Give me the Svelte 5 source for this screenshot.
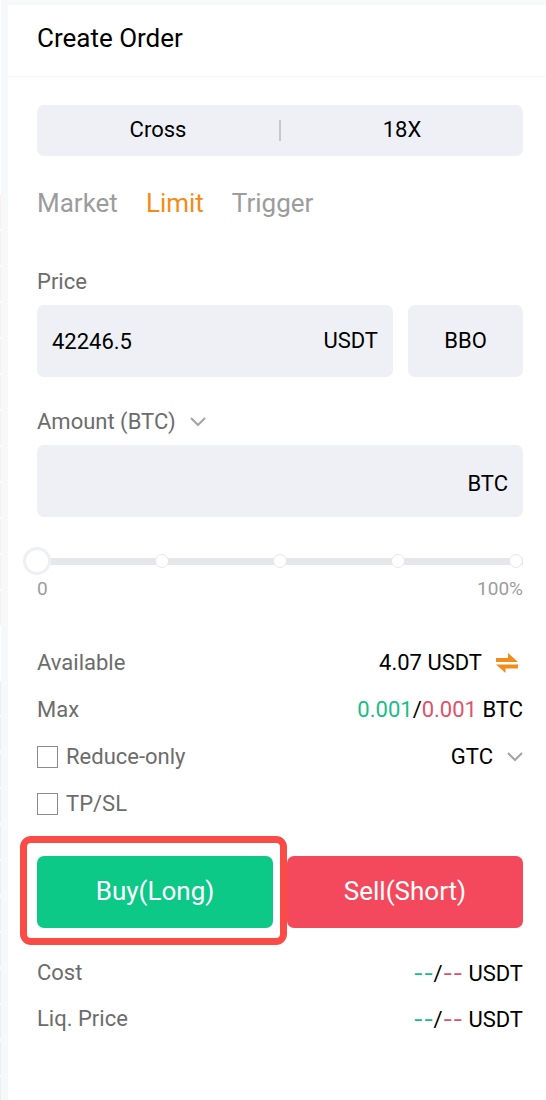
<script>
  const orderTypes = ['Market', 'Limit', 'Trigger'];
  const estimates = ['Cost', 'Liq. Price'];

  let orderType = 'Limit';
  let price = '42246.5';
  let amount = '';
  let unit = 'BTC';
  let percent = 0;
  let timeInForce = 'GTC';
  let reduceOnly = false;
  let tpsl = false;
</script>

<div class="page">
  <div class="book-edge">
    <div class="asks"></div>
    <div class="bids"></div>
  </div>

  <main class="panel">
    <header>
      <h1>Create Order</h1>
    </header>

    <form class="order" on:submit|preventDefault>
      <div class="margin-mode">
        <button type="button">Cross</button>
        <span class="divider"></span>
        <button type="button">18X</button>
      </div>

      <div class="tabs">
        {#each orderTypes as type}
          <button type="button" class:active={type === orderType} on:click={() => (orderType = type)}>{type}</button>
        {/each}
      </div>

      <label class="price-label" for="price">Price</label>
      <div class="price-row">
        <div class="field">
          <input id="price" type="text" bind:value={price} />
          <span>USDT</span>
        </div>
        <button type="button" class="bbo">BBO</button>
      </div>

      <div class="amount-label">
        <select aria-label="Amount unit" bind:value={unit}>
          <option value="BTC">Amount (BTC)</option>
          <option value="USDT">Amount (USDT)</option>
        </select>
        <svg class="chevron" viewBox="0 0 16 10"><path d="M1 1l7 7 7-7" /></svg>
      </div>
      <div class="field amount">
        <input type="text" aria-label="Amount" bind:value={amount} />
        <span>{unit}</span>
      </div>

      <div class="slider">
        <div class="track"></div>
        <div class="stops">
          <i></i><i></i><i></i><i></i><i></i>
        </div>
        <input type="range" min="0" max="100" aria-label="Percent of balance" bind:value={percent} />
      </div>
      <div class="scale"><span>0</span><span>100%</span></div>

      <div class="rows">
        <div class="row">
          <span>Available</span>
          <span class="value available">
            4.07 USDT
            <button type="button" class="transfer" aria-label="Transfer">
              <svg viewBox="0 0 22 20">
                <path d="M0 5h12V0l10 9H0z" />
                <path d="M22 15.500H9.500V20L0 11.500h22z" />
              </svg>
            </button>
          </span>
        </div>
        <div class="row">
          <span>Max</span>
          <span class="value"><span class="long">0.001</span>/<span class="short">0.001</span> BTC</span>
        </div>
        <div class="row">
          <label class="check"><input type="checkbox" bind:checked={reduceOnly} />Reduce-only</label>
          <span class="value force">
            <select aria-label="Time in force" bind:value={timeInForce}>
              <option>GTC</option>
              <option>IOC</option>
              <option>FOK</option>
            </select>
            <svg class="chevron" viewBox="0 0 16 10"><path d="M1 1l7 7 7-7" /></svg>
          </span>
        </div>
        <div class="row">
          <label class="check"><input type="checkbox" bind:checked={tpsl} />TP/SL</label>
        </div>
      </div>

      <div class="actions">
        <div class="highlight">
          <button type="submit" class="buy">Buy(Long)</button>
        </div>
        <button type="submit" class="sell">Sell(Short)</button>
      </div>

      <div class="rows estimates">
        {#each estimates as name}
          <div class="row">
            <span>{name}</span>
            <span class="value"><span class="long empty">--</span>/<span class="short empty">--</span> USDT</span>
          </div>
        {/each}
      </div>
    </form>
  </main>
</div>

<style>
  :global(body) {
    margin: 0;
    background: #f7f8fa;
  }

  .page {
    display: flex;
    min-height: 100vh;
    font-family: Roboto, "Liberation Sans", sans-serif;
    font-size: 22px;
    line-height: 30px;
    color: #000;
  }

  /* sliver of the order book beside the panel */
  .book-edge {
    flex: none;
    width: 1px;
    margin-right: 7px;
    padding-top: 195px;
    box-sizing: border-box;
    display: flex;
    flex-direction: column;
    gap: 54px;
    background: #fff;
  }

  .asks {
    height: 432px;
    background: repeating-linear-gradient(#fdeeec 0 34px, #fff 34px 36px);
  }

  .bids {
    flex: 1;
    background: repeating-linear-gradient(#e3f4ef 0 34px, #fff 34px 36px);
  }

  .panel {
    flex: 1;
    min-width: 0;
    margin-top: 5px;
    background: #fff;
  }

  header {
    padding: 18px 29px 23px;
    border-bottom: 1px solid #f4f5f7;
  }

  h1 {
    margin: 0;
    font-size: 26px;
    font-weight: 400;
    line-height: 30px;
  }

  .order {
    padding: 28px 23px 28px 29px;
  }

  button,
  input,
  select {
    margin: 0;
    padding: 0;
    border: 0;
    background: none;
    color: inherit;
    font: inherit;
    outline: none;
  }

  button {
    cursor: pointer;
  }

  select {
    appearance: none;
    field-sizing: content;
  }

  .margin-mode {
    display: flex;
    align-items: center;
    height: 51px;
    border-radius: 7px;
    background: #eff0f5;
  }

  .margin-mode button {
    flex: 1;
    height: 100%;
    padding-bottom: 2px;
  }

  .divider {
    width: 2px;
    height: 21px;
    background: #c6c7cb;
  }

  .tabs {
    display: flex;
    gap: 28px;
    margin-top: 32px;
    font-size: 26px;
    color: #9c9c9c;
  }

  .tabs .active {
    color: #f68a16;
  }

  .price-label {
    display: block;
    margin: 49px 0 8px;
    color: #6c6c6c;
  }

  .price-row {
    display: flex;
    gap: 15px;
  }

  .field {
    flex: 1;
    min-width: 0;
    height: 72px;
    padding: 0 15px;
    box-sizing: border-box;
    display: flex;
    align-items: center;
    border-radius: 7px;
    background: #eff0f5;
  }

  .field input {
    flex: 1;
    min-width: 0;
    height: 100%;
  }

  .amount {
    padding-top: 6px;
  }

  .bbo {
    width: 115px;
    border-radius: 7px;
    background: #eff0f5;
  }

  .amount-label {
    display: flex;
    align-items: center;
    gap: 14px;
    margin: 30px 0 8px;
    color: #6c6c6c;
  }

  .chevron {
    flex: none;
    width: 16px;
    height: 10px;
    fill: none;
    stroke: #a3a3a3;
    stroke-width: 2;
  }

  .slider {
    position: relative;
    height: 28px;
    margin-top: 30px;
    display: flex;
    align-items: center;
  }

  .track {
    width: 100%;
    height: 7px;
    background: #e6e7eb;
  }

  .stops {
    position: absolute;
    inset: 0;
    display: flex;
    align-items: center;
    justify-content: space-between;
  }

  .stops i {
    width: 14px;
    height: 14px;
    box-sizing: border-box;
    border: 1px solid #e6e7eb;
    border-radius: 50%;
    background: #fff;
  }

  .slider input {
    position: absolute;
    top: 0;
    left: -14px;
    width: calc(100% + 14px);
    height: 28px;
    appearance: none;
  }

  .slider input::-webkit-slider-thumb {
    appearance: none;
    width: 28px;
    height: 28px;
    box-sizing: border-box;
    border: 3px solid #eff0f5;
    border-radius: 50%;
    background: #fff;
  }

  .scale {
    display: flex;
    justify-content: space-between;
    margin-top: 2px;
    font-size: 19px;
    line-height: 24px;
    color: #9c9c9c;
  }

  .rows {
    display: flex;
    flex-direction: column;
    gap: 17px;
    margin-top: 47px;
    color: #6c6c6c;
  }

  .row {
    display: flex;
    align-items: center;
    justify-content: space-between;
    height: 30px;
  }

  .value {
    color: #000;
  }

  .available,
  .force {
    display: flex;
    align-items: center;
    gap: 14px;
  }

  .long {
    color: #17bd88;
  }

  .short {
    color: #e0526a;
  }

  .empty {
    font-family: Inter, Roboto, sans-serif;
  }

  .transfer {
    display: flex;
    padding-right: 5px;
  }

  .transfer svg {
    width: 22px;
    height: 20px;
    fill: #f28c1b;
  }

  .check {
    display: flex;
    align-items: center;
    gap: 8px;
  }

  .check input {
    appearance: none;
    width: 21px;
    height: 22px;
    border: 1px solid #8c8c8c;
  }

  .check input:checked {
    background: #f68a16;
  }

  .actions {
    display: flex;
    gap: 14px;
    margin-top: 37px;
    font-size: 26px;
    color: #fff;
  }

  .highlight,
  .sell {
    flex: 1;
  }

  .highlight {
    position: relative;
  }

  .highlight::after {
    content: "";
    position: absolute;
    inset: -20px -14px -17px -17px;
    border: 7px solid #fa4b47;
    border-radius: 11px;
    pointer-events: none;
  }

  .buy,
  .sell {
    height: 72px;
    padding-bottom: 2px;
    border-radius: 7px;
  }

  .buy {
    width: 100%;
    background: #0cc988;
  }

  .sell {
    background: #f4495d;
  }

  .estimates {
    gap: 16px;
    margin-top: 30px;
  }
</style>
